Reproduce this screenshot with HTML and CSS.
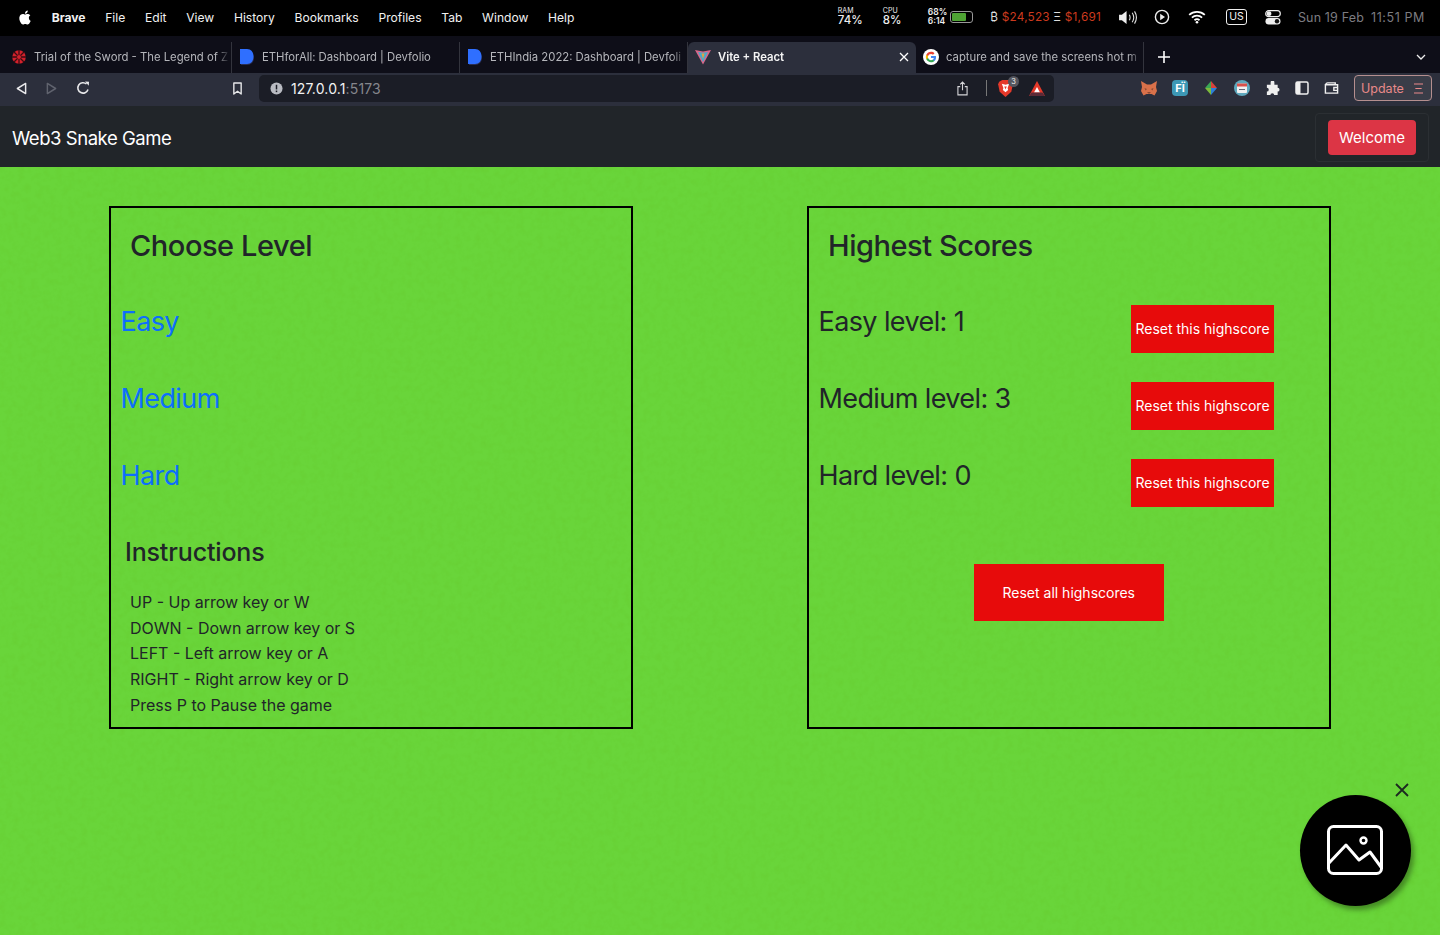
FILE: index.html
```html
<!DOCTYPE html>
<html lang="en">
  <head>
    <meta charset="UTF-8" />
    <meta name="viewport" content="width=device-width, initial-scale=1.0" />
    <title>Vite + React</title>
    <link rel="stylesheet" href="styles.css">
  </head>
  <body>
    <!-- mac menu bar -->
    <div class="menubar">
      <svg class="apple" viewBox="0 0 24 24" width="14" height="15"><path fill="#fff" d="M12.152 6.896c-.948 0-2.415-1.078-3.96-1.04-2.04.027-3.91 1.183-4.961 3.014-2.117 3.675-.546 9.103 1.519 12.09 1.013 1.454 2.208 3.09 3.792 3.039 1.52-.065 2.09-.987 3.935-.987 1.831 0 2.35.987 3.96.948 1.637-.026 2.676-1.48 3.676-2.948 1.156-1.688 1.636-3.325 1.662-3.415-.039-.013-3.182-1.221-3.22-4.857-.026-3.04 2.48-4.494 2.597-4.559-1.429-2.09-3.623-2.324-4.39-2.376-2-.156-3.675 1.09-4.61 1.09zM15.53 3.83c.843-1.012 1.4-2.427 1.245-3.83-1.207.052-2.662.805-3.532 1.818-.78.896-1.454 2.338-1.273 3.714 1.338.104 2.715-.688 3.559-1.701"/></svg>
      <span class="menu-app">Brave</span>
      <span>File</span>
      <span>Edit</span>
      <span>View</span>
      <span>History</span>
      <span>Bookmarks</span>
      <span>Profiles</span>
      <span>Tab</span>
      <span>Window</span>
      <span>Help</span>

      <div class="status">
        <div class="stat stat-ram"><small>RAM</small><b>74%</b></div>
        <div class="stat stat-cpu"><small>CPU</small><b>8%</b></div>
        <div class="battery-text"><b>68%</b><b>6:14</b></div>
        <div class="battery"><i></i></div>
        <div class="prices"><span class="coin">₿</span> <span class="red">$24,523</span> <span class="coin">Ξ</span> <span class="red">$1,691</span></div>
        <svg class="st-sound" viewBox="0 0 20 16" width="19" height="15"><path fill="#eee" d="M1 5h3l5-4v14l-5-4H1z"/><path fill="none" stroke="#ddd" stroke-width="1.2" d="M12 5c1 2 1 4 0 6M15 3c2 3 2 7 0 10M17.5 1.5c2.5 4 2.5 9 0 13"/></svg>
        <svg class="st-play" viewBox="0 0 16 16" width="16" height="16"><circle cx="8" cy="8" r="6.6" fill="none" stroke="#eee" stroke-width="1.4"/><path fill="#eee" d="M6.2 4.8 11 8l-4.8 3.2z"/></svg>
        <svg class="st-wifi" viewBox="0 0 18 14" width="18" height="14"><path fill="none" stroke="#fff" stroke-width="1.8" d="M1.2 4.8c4.4-4 11.2-4 15.6 0M3.9 7.6c2.9-2.6 7.3-2.6 10.2 0M6.5 10.2c1.4-1.2 3.6-1.2 5 0"/><circle cx="9" cy="12.3" r="1.3" fill="#fff"/></svg>
        <span class="st-lang">US</span>
        <svg class="st-toggle" viewBox="0 0 16 15" width="16" height="15"><rect x=".7" y=".7" width="14.6" height="6" rx="3" fill="none" stroke="#eee" stroke-width="1.2"/><circle cx="4" cy="3.7" r="2.4" fill="#eee"/><rect x=".5" y="8" width="15" height="6.5" rx="3.2" fill="#eee"/><circle cx="12" cy="11.2" r="2.2" fill="#111"/></svg>
        <span class="clock">Sun 19 Feb</span>
        <span class="clock clock-time">11:51 PM</span>
      </div>
    </div>

    <!-- browser tabs -->
    <div class="tabbar">
      <div class="tab tab-first">
        <svg class="favicon" viewBox="0 0 16 16" width="16" height="16"><circle cx="8" cy="8" r="6.8" fill="#d3212c"/><path stroke="#3a0d12" stroke-width="1.3" d="M8 1v14M1 8h14M3 3l10 10M13 3 3 13"/><circle cx="8" cy="8" r="2" fill="#d3212c"/></svg>
        <span class="tab-title">Trial of the Sword - The Legend of Z</span>
      </div>
      <div class="tab">
        <svg class="favicon" viewBox="0 0 16 16" width="16" height="16"><path fill="#2a2e52" d="M2 2h6c4 0 7 3 7 7s-3 7-7 7H2z"/><path fill="#2f6fff" d="M1 0h7c4 0 6.500 3 6.500 7.500S12 15 8 15H1z"/></svg>
        <span class="tab-title">ETHforAll: Dashboard | Devfolio</span>
      </div>
      <div class="tab">
        <svg class="favicon" viewBox="0 0 16 16" width="16" height="16"><path fill="#2a2e52" d="M2 2h6c4 0 7 3 7 7s-3 7-7 7H2z"/><path fill="#2f6fff" d="M1 0h7c4 0 6.500 3 6.500 7.500S12 15 8 15H1z"/></svg>
        <span class="tab-title">ETHIndia 2022: Dashboard | Devfoli</span>
      </div>
      <div class="tab tab-active">
        <svg class="favicon" viewBox="0 0 16 16" width="16" height="16"><path fill="#d9668a" d="M0 1l8 1.500L16 1 8 15.500z"/><path fill="#4ba9c8" d="M3 3l5 .8L13 3 8 13z"/><path fill="#e8a13c" d="M6.500 4.500h3L8 10z"/></svg>
        <span class="tab-title">Vite + React</span>
        <svg class="tab-close" viewBox="0 0 10 10" width="10" height="10"><path stroke="#fff" stroke-width="1.3" d="M1 1l8 8M9 1 1 9"/></svg>
      </div>
      <div class="tab">
        <svg class="favicon" viewBox="0 0 24 24" width="16" height="16"><circle cx="12" cy="12" r="12" fill="#fff"/><g transform="translate(3.500 3.500) scale(.71)"><path fill="#4285F4" d="M22.560 12.250c0-.780-.070-1.530-.200-2.250H12v4.260h5.920c-.260 1.370-1.040 2.530-2.210 3.310v2.770h3.570c2.080-1.920 3.280-4.740 3.280-8.090z"/><path fill="#34A853" d="M12 23c2.970 0 5.460-.980 7.280-2.660l-3.570-2.770c-.980.660-2.230 1.060-3.710 1.060-2.860 0-5.290-1.930-6.160-4.530H2.180v2.840C3.990 20.530 7.700 23 12 23z"/><path fill="#FBBC05" d="M5.840 14.090c-.220-.660-.350-1.360-.350-2.090s.130-1.430.350-2.090V7.070H2.180C1.430 8.550 1 10.220 1 12s.430 3.450 1.180 4.930l3.660-2.840z"/><path fill="#EA4335" d="M12 5.380c1.620 0 3.060.560 4.210 1.640l3.150-3.150C17.450 2.090 14.970 1 12 1 7.700 1 3.990 3.470 2.180 7.070l3.660 2.840c.870-2.600 3.300-4.530 6.160-4.530z"/></g></svg>
        <span class="tab-title">capture and save the screens hot m</span>
      </div>
      <svg class="tab-new" viewBox="0 0 12 12" width="12" height="12"><path stroke="#fff" stroke-width="1.6" d="M6 0v12M0 6h12"/></svg>
      <svg class="tab-list" viewBox="0 0 10 6" width="10" height="6"><path fill="none" stroke="#eee" stroke-width="1.3" d="M1 1l4 4 4-4"/></svg>
    </div>

    <!-- browser toolbar -->
    <div class="toolbar">
      <svg class="tool-back" viewBox="0 0 12 14" width="11" height="13"><path fill="none" stroke="#e8e8ea" stroke-width="1.6" stroke-linejoin="round" d="M10.500 1.500v11L1.500 7z"/></svg>
      <svg class="tool-forward" viewBox="0 0 12 14" width="11" height="13"><path fill="none" stroke="#60636e" stroke-width="1.6" stroke-linejoin="round" d="M1.500 1.500v11l9-5.500z"/></svg>
      <svg class="tool-reload" viewBox="0 0 14 14" width="14" height="14"><path fill="none" stroke="#e8e8ea" stroke-width="1.6" d="M12 8.500A5.200 5.200 0 1 1 10.500 3"/><path fill="#e8e8ea" d="M9 .5l4 .2-.2 4z"/></svg>
      <svg class="tool-mark" viewBox="0 0 12 14" width="11" height="13"><path fill="none" stroke="#e8e8ea" stroke-width="1.5" stroke-linejoin="round" d="M2 1h8v12L6 10l-4 3z"/></svg>

      <div class="urlbar">
        <svg viewBox="0 0 14 14" width="13" height="13"><circle cx="7" cy="7" r="6.500" fill="#b9bbc2"/><rect x="6.200" y="3" width="1.600" height="5" fill="#1c1e27"/><rect x="6.200" y="9.200" width="1.600" height="1.700" fill="#1c1e27"/></svg>
        <span class="url">127.0.0.1<span class="url-port">:5173</span></span>
        <svg class="url-share" viewBox="0 0 12 16" width="11" height="15"><path fill="none" stroke="#d5d5d8" stroke-width="1.200" d="M3.500 6H1v9h10V6H8.500M6 10V1M3.500 3.500 6 1l2.500 2.500"/></svg>
        <i class="url-sep"></i>
        <div class="shield">
          <svg viewBox="0 0 16 18" width="17" height="19"><path fill="#e5392a" d="M2 2.500 5 1h6l3 1.500L15 5l-1.500 7L8 17 2.500 12 1 5z"/><path fill="#fff" d="M4.500 4.500 8 5.500l3.500-1L10 8.500l.5 2L8 12.500l-2.500-2L6 8.500z"/><path fill="#e5392a" d="M6.800 7h2.400L8 10z"/></svg>
          <span class="shield-count">3</span>
        </div>
        <svg class="url-bat" viewBox="0 0 16 15" width="16" height="15"><path fill="#e5392a" d="M8 0l8 15H0z"/><path fill="#fff" d="M8 6l3 5.500H5z"/><path fill="#5c2a36" d="M0 15l2.500-3.500h11L16 15z"/></svg>
      </div>

      <div class="extensions">
        <svg viewBox="0 0 16 15" width="16" height="15"><path fill="#d9714a" d="M0 0l6 3.500h4L16 0l-1 6 1 4-2.500 4.500-3-1.500h-5l-3 1.500L0 10l1-4z"/><path fill="#8c4a32" d="M3.500 7l2.500 1-1.500 1.500zM12.500 7 10 8l1.500 1.500zM6 11h4l-2 2z"/></svg>
        <div class="ext-fi">F<span>Ï</span></div>
        <svg viewBox="0 0 16 16" width="16" height="16"><path fill="#3aa655" d="M8 1 2 8h6z"/><path fill="#d8433c" d="M8 1l6 7H8z"/><path fill="#2c7fd8" d="M14 8l-6 7V8z"/><path fill="#7dbb3c" d="M2 8l6 7V8z"/></svg>
        <svg viewBox="0 0 16 16" width="16" height="16"><circle cx="8" cy="8" r="8" fill="#5fa8bd"/><rect x="3" y="3.500" width="10" height="9.500" rx="1" fill="#f1f1f1"/><rect x="3" y="3.500" width="10" height="3" fill="#d8504a"/><rect x="5" y="9" width="6" height="1" fill="#667"/></svg>
        <svg viewBox="0 0 16 16" width="15" height="15"><path fill="#efefef" d="M6 1.500a2 2 0 0 1 4 0V4h3.500v3.300a2 2 0 0 1 0 4V15H9.800a2 2 0 0 0-4 0H2v-3.700a2 2 0 0 0 0-4V4h4z"/></svg>
        <svg viewBox="0 0 14 14" width="14" height="14"><rect x="1" y="1" width="12" height="12" rx="1.500" fill="none" stroke="#efefef" stroke-width="1.500"/><rect x="1" y="1" width="4.500" height="12" fill="#efefef"/></svg>
        <svg viewBox="0 0 16 14" width="15" height="14"><path fill="none" stroke="#efefef" stroke-width="1.500" d="M2 3.500c0-1.200 1-2 2-2h8v2M1.500 3.500h13v9h-13z"/><path fill="none" stroke="#efefef" stroke-width="1.500" d="M14.500 6.500H10.500v3h4"/></svg>
      </div>

      <div class="update">
        <span>Update</span>
        <svg viewBox="0 0 10 12" width="9" height="11"><path stroke="#e98a8a" stroke-width="1.300" d="M0 1h10M1.500 6h7M0 11h10"/></svg>
      </div>
    </div>

    <!-- the app itself -->
    <nav class="navbar">
      <span class="brand">Web3 Snake Game</span>
      <div class="nav-box"><button class="btn-welcome">Welcome</button></div>
    </nav>

    <main class="game">
      <svg class="grain" width="100%" height="100%">
        <filter id="paper"><feTurbulence type="fractalNoise" baseFrequency="0.16" numOctaves="3" seed="4"/><feColorMatrix values="0 0 0 0 0.1  0 0 0 0 0.35  0 0 0 0 0  1.6 0 0 0 -0.65"/></filter>
        <rect width="100%" height="100%" filter="url(#paper)" opacity="0.1"/>
      </svg>

      <section class="panel">
        <h2>Choose Level</h2>
        <div class="row"><a href="#">Easy</a></div>
        <div class="row"><a href="#">Medium</a></div>
        <div class="row"><a href="#">Hard</a></div>
        <h4>Instructions</h4>
        <ul class="keys">
          <li>UP - Up arrow key or W</li>
          <li>DOWN - Down arrow key or S</li>
          <li>LEFT - Left arrow key or A</li>
          <li>RIGHT - Right arrow key or D</li>
          <li>Press P to Pause the game</li>
        </ul>
      </section>

      <section class="panel">
        <h2>Highest Scores</h2>
        <div class="row score"><span>Easy level: 1</span><button class="btn-reset">Reset this highscore</button></div>
        <div class="row score"><span>Medium level: 3</span><button class="btn-reset">Reset this highscore</button></div>
        <div class="row score"><span>Hard level: 0</span><button class="btn-reset">Reset this highscore</button></div>
        <button class="btn-reset-all">Reset all highscores</button>
      </section>

      <svg class="shot-close" viewBox="0 0 14 14" width="14" height="14"><path stroke="#1c2a20" stroke-width="1.800" d="M1 1l12 12M13 1 1 13"/></svg>
      <button class="shot-fab">
        <svg viewBox="0 0 56 50" width="56" height="50"><rect x="1.500" y="1.500" width="53" height="47" rx="5" fill="none" stroke="#fff" stroke-width="3"/><circle cx="36.500" cy="15.500" r="3" fill="none" stroke="#fff" stroke-width="2.400"/><path fill="none" stroke="#fff" stroke-width="3" stroke-linejoin="round" d="M2 38 19 20l13 15 11-8 11 15"/></svg>
      </button>
    </main>
  </body>
</html>
```

FILE: styles.css
```css
* {
  box-sizing: border-box;
}
body {
  margin: 0;
  height: 935px;
  overflow: hidden;
  display: flex;
  flex-direction: column;
  font-family: Inter, "Noto Sans", sans-serif;
  background: #69d53a;
}

/* menu bar */
.menubar {
  height: 36px;
  flex: none;
  background: #000;
  color: #f1f1f1;
  display: flex;
  align-items: center;
  gap: 19.7px;
  padding: 0 0 2px 18px;
  font-size: 12.1px;
}
.menu-app {
  font-weight: 700;
}
.status {
  margin-left: auto;
  display: flex;
  align-items: center;
  height: 100%;
  padding-right: 15px;
}
.stat {
  display: flex;
  flex-direction: column;
  line-height: 1;
  width: 24px;
  color: #eee;
}
.stat small {
  font-size: 7px;
  margin-bottom: 1px;
}
.stat b {
  font-size: 11.500px;
  font-weight: 500;
}
.stat-cpu {
  margin-left: 21px;
}
.battery-text {
  margin-left: 21px;
  display: flex;
  flex-direction: column;
  font-size: 8.500px;
  line-height: 9px;
  color: #eee;
}
.battery-text b {
  font-weight: 600;
}
.battery {
  width: 23px;
  height: 12px;
  margin-left: 3px;
  border: 1px solid #999;
  border-radius: 3px;
  padding: 1px;
}
.battery i {
  display: block;
  width: 14px;
  height: 8px;
  background: #4fa334;
  border-radius: 1px;
}
.prices {
  margin-left: 17px;
  font-size: 11.800px;
  letter-spacing: 0.2px;
  color: #ddd;
  white-space: nowrap;
}
.red {
  color: #cc3a1e;
}
.st-sound {
  margin-left: 17px;
}
.st-play {
  margin-left: 17px;
}
.st-wifi {
  margin-left: 18px;
}
.st-lang {
  margin-left: 20px;
  width: 21px;
  height: 16px;
  border: 1.200px solid #eee;
  border-radius: 3px;
  font-size: 10.500px;
  line-height: 14px;
  text-align: center;
}
.st-toggle {
  margin-left: 18px;
}
.clock {
  margin-left: 17px;
  font-size: 12.500px;
  letter-spacing: 0.15px;
  color: #7c7c80;
  white-space: nowrap;
}
.clock-time {
  margin-left: 7px;
  letter-spacing: 0.6px;
}

/* tabs */
.tabbar {
  height: 37px;
  flex: none;
  background: #0e0e18;
  display: flex;
  align-items: flex-end;
}
.tab {
  width: 228px;
  height: 31px;
  display: flex;
  align-items: center;
  gap: 7px;
  padding: 0 1px 2px 7px;
  font-size: 11.300px;
  color: #b5b6bb;
  border-right: 1px solid #33343d;
}
.tab-first {
  width: 232px;
  padding-left: 11px;
}
.tab-active {
  padding-right: 8px;
  background: #2c2f3c;
  border-radius: 6px 6px 0 0;
  color: #f4f4f4;
  font-weight: 600;
  border-right: 0;
}
.favicon {
  flex: none;
}
.tab-title {
  flex: 1;
  overflow: hidden;
  white-space: nowrap;
  -webkit-mask-image: linear-gradient(to left, transparent, #000 14px);
  mask-image: linear-gradient(to left, transparent, #000 14px);
}
.tab-close {
  flex: none;
  margin-right: -1px;
}
.tab-new {
  margin: 0 0 10px 14px;
}
.tab-list {
  margin: 0 14px 13px auto;
}

/* toolbar */
.toolbar {
  height: 33px;
  flex: none;
  background: #2c2f3c;
  display: flex;
  align-items: center;
  padding: 0 0 3px 16px;
}
.tool-forward {
  margin-left: 19px;
}
.tool-reload {
  margin-left: 19px;
}
.tool-mark {
  margin-left: 142px;
}
.urlbar {
  width: 795px;
  height: 27px;
  margin-left: 16px;
  padding: 0 9px 0 11px;
  background: #1b1d26;
  border-radius: 5px;
  display: flex;
  align-items: center;
  gap: 8px;
}
.url {
  color: #f2f2f2;
  font-size: 14px;
  letter-spacing: 0.15px;
  flex: 1;
}
.url-port {
  color: #85868c;
}
.url-share {
  margin-right: 10px;
}
.url-sep {
  width: 1px;
  height: 16px;
  background: #777;
  margin-right: 2px;
}
.shield {
  position: relative;
  display: flex;
  margin-right: 7px;
}
.shield-count {
  position: absolute;
  top: -3px;
  right: -5px;
  width: 11px;
  height: 11px;
  border-radius: 50%;
  background: #55565f;
  color: #eee;
  font-size: 7.500px;
  line-height: 11px;
  text-align: center;
}
.extensions {
  width: 207px;
  margin-left: 87px;
  display: flex;
  align-items: center;
  gap: 15px;
}
.ext-fi {
  width: 16px;
  height: 16px;
  border-radius: 4px;
  background: #3d98b5;
  color: #fff;
  font-size: 11px;
  font-weight: 700;
  line-height: 16px;
  text-align: center;
}
.update {
  width: 78px;
  height: 26px;
  margin-left: 6px;
  border: 1px solid #b58f8f;
  border-radius: 4px;
  background: #3a3d48;
  color: #e98a8a;
  font-size: 12.500px;
  display: flex;
  align-items: center;
  justify-content: space-between;
  padding: 0 8px 0 6px;
}

/* navbar */
.navbar {
  height: 61px;
  flex: none;
  background: #212529;
  display: flex;
  align-items: center;
  justify-content: space-between;
  padding: 2px 11px 0 12px;
  color: #fff;
}
.brand {
  font-size: 18.500px;
  letter-spacing: -0.45px;
}
.nav-box {
  padding: 6px 12px;
  border: 1px solid #2b2f33;
  border-radius: 4px;
  display: flex;
}
.btn-welcome {
  width: 88px;
  height: 35px;
  padding: 0;
  border: none;
  border-radius: 4px;
  background: #dc3545;
  color: #fff;
  font: 15px Inter, sans-serif;
}

/* game */
.game {
  flex: 1;
  position: relative;
  display: flex;
  align-items: flex-start;
  gap: 174px;
  padding: 39px 0 0 109px;
  color: #212529;
}
.grain {
  position: absolute;
  inset: 0;
}
.panel {
  position: relative;
  width: 524px;
  height: 523px;
  border: 2px solid #000;
  padding: 19px 10px 0 9.500px;
  display: flex;
  flex-direction: column;
}
h2 {
  margin: 0 0 40px 9.500px;
  font-size: 29px;
  font-weight: 500;
  line-height: 38px;
  letter-spacing: -0.45px;
}
.row {
  height: 77px;
  flex: none;
  font-size: 27px;
  line-height: 34px;
  letter-spacing: -0.6px;
}
.row a {
  color: #0d6efd;
  text-decoration: none;
}
.score {
  display: flex;
  align-items: flex-start;
}
.score span {
  width: 312.500px;
}
h4 {
  margin: 2px 0 23px 4.500px;
  font-size: 25px;
  font-weight: 500;
  line-height: 29px;
  letter-spacing: -0.15px;
}
.keys {
  list-style: none;
  margin: 0 0 0 9.500px;
  padding: 0;
  font-size: 16px;
  line-height: 25.700px;
}
.btn-reset {
  width: 143px;
  height: 48px;
  padding: 0 0 2px;
  border: none;
  background: #e70b0b;
  color: #fff;
  font: 14px Inter, sans-serif;
}
.btn-reset-all {
  align-self: center;
  width: 190px;
  height: 57px;
  margin-top: 28px;
  padding: 0;
  border: none;
  background: #e70b0b;
  color: #fff;
  font: 14px Inter, sans-serif;
}

/* screenshot widget, floats over the page */
.shot-fab {
  position: absolute;
  left: 1300px;
  top: 628px;
  width: 111px;
  height: 111px;
  padding: 0 2px 2px 0;
  border: none;
  border-radius: 50%;
  background: #000;
  box-shadow: 3px 4px 5px rgba(40, 80, 20, 0.55);
  display: flex;
  align-items: center;
  justify-content: center;
}
.shot-close {
  position: absolute;
  left: 1395px;
  top: 616px;
}
```
